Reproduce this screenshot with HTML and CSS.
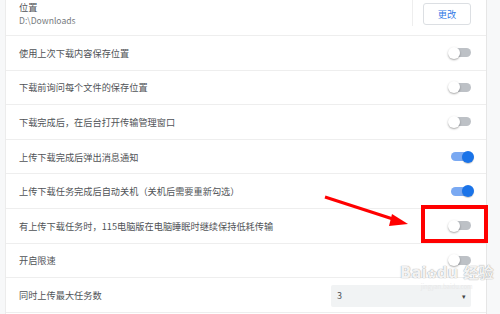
FILE: index.html
```html
<!DOCTYPE html>
<html lang="zh-CN">
<head>
  <meta charset="UTF-8">
  <meta name="viewport" content="width=device-width, initial-scale=1.0">
  <title>下载设置</title>
  <link rel="stylesheet" href="styles.css">
</head>
<body>
  <div class="page">
    <div class="card">
      <div class="row row-first">
        <div class="label">
          <div class="title">位置</div>
          <div class="sub">D:\Downloads</div>
        </div>
        <div class="sep"></div>
        <button class="btn">更改</button>
      </div>
      <div class="row">
        <span class="text">使用上次下载内容保存位置</span>
        <span class="toggle"></span>
      </div>
      <div class="row">
        <span class="text">下载前询问每个文件的保存位置</span>
        <span class="toggle"></span>
      </div>
      <div class="row">
        <span class="text">下载完成后，在后台打开传输管理窗口</span>
        <span class="toggle"></span>
      </div>
      <div class="row">
        <span class="text">上传下载完成后弹出消息通知</span>
        <span class="toggle on"></span>
      </div>
      <div class="row">
        <span class="text">上传下载任务完成后自动关机（关机后需要重新勾选）</span>
        <span class="toggle on"></span>
      </div>
      <div class="row">
        <span class="text">有上传下载任务时，115电脑版在电脑睡眠时继续保持低耗传输</span>
        <span class="toggle"></span>
      </div>
      <div class="row">
        <span class="text">开启限速</span>
        <span class="toggle"></span>
      </div>
      <div class="row">
        <span class="text">同时上传最大任务数</span>
        <div class="select">
          <span>3</span>
          <span class="caret">▾</span>
        </div>
      </div>
    </div>
  </div>

  <!-- 标注 -->
  <div class="mark-box"></div>
  <svg class="mark-arrow" width="500" height="314" viewBox="0 0 500 314">
    <line x1="325" y1="197" x2="396" y2="220" stroke="#f00" stroke-width="3"/>
    <polygon points="408,224 392,214 389,226" fill="#f00"/>
  </svg>
  <div class="watermark">
    <div class="wm-big">Bai<span class="paw">✿</span>du 经验</div>
    <div class="wm-small">jingyan.baidu.com</div>
  </div>
</body>
</html>
```

FILE: styles.css
```css
body {
  margin: 0;
  background: #f7f8f9;
  font-family: "Noto Sans CJK SC", "Noto Sans", sans-serif;
  color: #505357;
  overflow: hidden;
}
.page {
  width: 500px;
  height: 314px;
  padding-left: 5px;
  box-sizing: border-box;
}
.card {
  width: 482px;
  height: 314px;
  background: #fff;
  border-left: 1px solid #ececec;
  border-right: 1px solid #e6e6e6;
  box-sizing: border-box;
}
.row {
  height: 34.6px;
  box-sizing: border-box;
  border-bottom: 1px solid #eeeeee;
  display: flex;
  align-items: center;
  justify-content: space-between;
  padding: 0 15px 0 13px;
}
.row-first {
  height: 36px;
  align-items: flex-start;
  justify-content: flex-start;
  padding-top: 1px;
}
.text {
  font-size: 9.2px;
  line-height: 12px;
}
.label {
  flex: 1;
}
.title {
  font-size: 9.2px;
  line-height: 12px;
}
.sub {
  font-size: 8.6px;
  line-height: 12px;
  margin-top: 1px;
  color: #777b80;
}
.sep {
  width: 1px;
  height: 26px;
  margin-top: -1px;
  background: #eeeeee;
  margin-right: 10px;
}
.btn {
  width: 48px;
  height: 22px;
  margin-top: 2px;
  background: #fff;
  border: 1px solid #dcdfe3;
  border-radius: 3px;
  color: #2f7be6;
  font-family: inherit;
  font-size: 9.2px;
  padding: 0;
}
.toggle {
  position: relative;
  width: 20px;
  height: 9px;
  border-radius: 5px;
  background: #bdc1c6;
}
.toggle::after {
  content: "";
  position: absolute;
  left: -3px;
  top: -1.5px;
  width: 12px;
  height: 12px;
  border-radius: 50%;
  background: #fff;
  box-shadow: 0 1px 2px rgba(0,0,0,0.35);
}
.toggle.on {
  background: #7aa9f2;
}
.toggle.on::after {
  left: 11px;
  background: #1a73e8;
  box-shadow: 0 1px 1px rgba(0,0,0,0.2);
}
.select {
  width: 140px;
  height: 22px;
  background: #f1f3f4;
  border-radius: 2px;
  display: flex;
  align-items: center;
  justify-content: space-between;
  padding: 0 5px 0 6px;
  box-sizing: border-box;
  font-size: 9px;
  margin-top: 2px;
}
.caret {
  font-size: 7px;
  color: #444;
}
.mark-box {
  position: absolute;
  left: 421px;
  top: 205px;
  width: 67px;
  height: 38px;
  border: 4.5px solid #f00;
  box-sizing: border-box;
}
.mark-arrow {
  position: absolute;
  left: 0;
  top: 0;
}
.watermark {
  position: absolute;
  left: 400px;
  top: 264px;
  white-space: nowrap;
  color: rgba(255,255,255,0.9);
  text-shadow: 0 0 1px rgba(130,130,130,0.6), 0 0 1px rgba(130,130,130,0.6);
  text-align: center;
}
.wm-big {
  font-family: "DejaVu Sans", "Noto Sans CJK SC", sans-serif;
  font-size: 15px;
  font-weight: bold;
  line-height: 18px;
}
.paw {
  font-size: 12px;
}
.wm-small {
  font-size: 6px;
  line-height: 8px;
  color: rgba(230,230,230,0.8);
  text-shadow: none;
}
```
